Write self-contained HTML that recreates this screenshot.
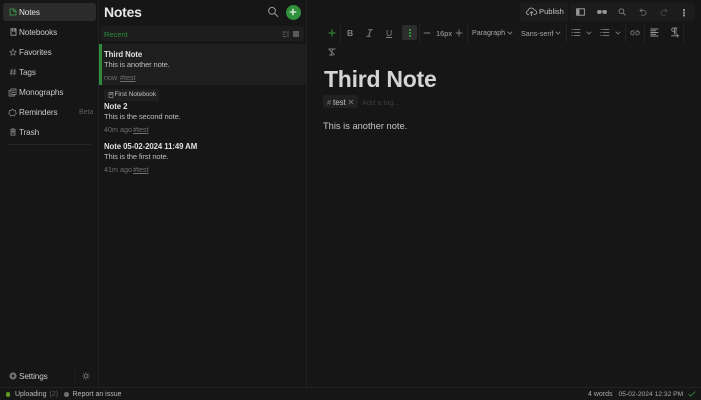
<!DOCTYPE html>
<html><head><meta charset="utf-8"><style>
*{margin:0;padding:0;box-sizing:border-box}
html,body{width:701px;height:400px;overflow:hidden;background:#161616}
#w{position:absolute;left:0;top:0;width:701px;height:400px;filter:blur(.3px);font-family:"Liberation Sans",sans-serif;color:#d8d8d8}
.t{position:absolute;white-space:nowrap;line-height:1}
.b{position:absolute}
svg{position:absolute;overflow:visible;fill:none;stroke-linecap:round;stroke-linejoin:round}
.nav{font-size:8.2px;color:#c8c8c8;left:19px;letter-spacing:-.12px}
.ti{font-size:7.8px;font-weight:bold;color:#e0e0e0;left:104px;letter-spacing:-.08px}
.bd{font-size:7.6px;color:#bcbcbc;left:104px;letter-spacing:-.15px}
.mt{font-size:7.2px;color:#6e6e6e}
.sep{position:absolute;width:1px;background:#232323;top:24px;height:18px}
.st{font-size:7px;color:#b8b8b8}
</style></head><body><div id="w">
<div class="b" style="left:98px;top:0;width:1px;height:388px;background:#222"></div>
<div class="b" style="left:306px;top:0;width:1px;height:388px;background:#222"></div>
<div class="b" style="left:0;top:387px;width:701px;height:1px;background:#222"></div>

<div class="b" style="left:3px;top:3px;width:93px;height:18px;background:#2b2b2b;border-radius:3px"></div>
<svg style="left:9px;top:8px" width="8" height="8" stroke="#3c8a44" stroke-width="1"><path d="M1 1H5L7 3V7H1Z"/><path d="M4.5 1V3.5H7"/></svg>
<div class="t nav" style="top:8.5px;color:#e4e4e4">Notes</div>
<svg style="left:9px;top:28px" width="8" height="8" stroke="#8e8e8e" stroke-width="1"><path d="M2 .8H7V7.2H2Z"/><path d="M3.5 .8V3H6V.8"/></svg>
<div class="t nav" style="top:28.5px">Notebooks</div>
<svg style="left:9px;top:48px" width="8" height="8" stroke="#7c7c7c" stroke-width=".8"><path d="M4 1L5 3.2L7.2 3.4L5.5 4.9L6 7.2L4 6L2 7.2L2.5 4.9L.8 3.4L3 3.2Z"/></svg>
<div class="t nav" style="top:48.5px">Favorites</div>
<svg style="left:9px;top:68px" width="8" height="8" stroke="#7c7c7c" stroke-width=".8"><path d="M3 1L2 7M6 1L5 7M1 3H7M1 5.2H7"/></svg>
<div class="t nav" style="top:68.5px">Tags</div>
<svg style="left:8px;top:88px" width="9" height="9" stroke="#7c7c7c" stroke-width=".9"><path d="M3 1H8V6.5H3Z"/><path d="M3 2.5H1V8H6.5V6.5"/><path d="M4.5 2.8H6.5M4.5 4.5H6.5"/></svg>
<div class="t nav" style="top:88.5px">Monographs</div>
<svg style="left:8px;top:108px" width="9" height="9" stroke="#7c7c7c" stroke-width=".8"><path d="M4.5 1L5.7 2.4H7.6V4.2L8.4 5.4L7 6.3L6.6 8L4.5 7.3L2.4 8L2 6.3L.6 5.4L1.4 4.2V2.4H3.3Z"/></svg>
<div class="t nav" style="top:108.5px">Reminders</div>
<div class="t" style="left:79px;top:109px;font-size:7px;color:#5c5c5c">Beta</div>
<svg style="left:9px;top:128px" width="8" height="8" stroke="#7c7c7c" stroke-width=".9"><path d="M2 2H6V7.2H2Z"/><path d="M1.3 1.8H6.7M3 .8H5M3 3.5H5M3 5H5"/></svg>
<div class="t nav" style="top:128.5px">Trash</div>
<div class="b" style="left:8px;top:144px;width:83px;height:1px;background:#262626"></div>

<svg style="left:9px;top:372px" width="8" height="8" stroke="none"><circle cx="4" cy="4" r="3.6" fill="#6e6e6e"/><circle cx="4" cy="4" r="1.2" fill="#161616"/></svg>
<div class="t nav" style="top:372.5px">Settings</div>
<div class="b" style="left:75px;top:368px;width:1px;height:16px;background:#1f1f1f"></div>
<svg style="left:82px;top:372px" width="8" height="8" stroke="#6e6e6e" stroke-width=".8"><circle cx="4" cy="4" r="1.6"/><path d="M4 .4V1.4M4 6.6V7.6M.4 4H1.4M6.6 4H7.6M1.5 1.5L2.2 2.2M5.8 5.8L6.5 6.5M1.5 6.5L2.2 5.8M5.8 2.2L6.5 1.5"/></svg>

<div class="t" style="left:104px;top:5px;font-size:14px;font-weight:bold;color:#e6e6e6;letter-spacing:-.25px">Notes</div>
<svg style="left:267px;top:6px" width="12" height="12" stroke="#9a9a9a" stroke-width="1"><circle cx="5" cy="4.8" r="3.4"/><path d="M7.6 7.4L10.8 10.6"/></svg>
<div class="b" style="left:285.5px;top:4.5px;width:15px;height:15px;border-radius:50%;background:#2f8f3a"></div>
<svg style="left:289px;top:8px" width="8" height="8" stroke="#e8f2e8" stroke-width="1.3"><path d="M4 1.2V6.8M1.2 4H6.8"/></svg>

<div class="b" style="left:101px;top:26px;width:203px;height:15px;background:#1d1d1d;border-radius:3px"></div>
<div class="t" style="left:104px;top:30.5px;font-size:7.5px;color:#2e8b3a">Recent</div>
<svg style="left:282px;top:30px" width="8" height="8" stroke="#5e5e5e" stroke-width=".9"><path d="M1 2H4M1 4.2H3M1 6.6H4M6 1.2V6.8"/></svg>
<div class="b" style="left:293px;top:31px;width:6px;height:6px;background:#5a5a5a"></div>

<div class="b" style="left:99px;top:44px;width:207px;height:41px;background:#1e1e1e"></div>
<div class="b" style="left:99px;top:44px;width:2.5px;height:41px;background:#2f8a3c"></div>
<div class="t ti" style="top:51px">Third Note</div>
<div class="t bd" style="top:61px">This is another note.</div>
<div class="t mt" style="left:104px;top:74px">now</div>
<div class="t mt" style="left:120px;top:74px;text-decoration:underline">#test</div>

<div class="b" style="left:104px;top:89px;width:55px;height:12px;background:#1f1f1f;border-radius:2px"></div>
<svg style="left:108px;top:92px" width="6" height="6" stroke="#8e8e8e" stroke-width=".7"><path d="M1 .5H5V5.5H1Z"/><path d="M2.2 .5V2.5H4V.5"/></svg>
<div class="t" style="left:114.5px;top:92px;font-size:6.4px;color:#c0c0c0">First Notebook</div>
<div class="t ti" style="top:103px">Note 2</div>
<div class="t bd" style="top:113px">This is the second note.</div>
<div class="t mt" style="left:104px;top:126px">40m ago</div>
<div class="t mt" style="left:133px;top:126px;text-decoration:underline">#test</div>

<div class="t ti" style="top:143px">Note 05-02-2024 11:49 AM</div>
<div class="t bd" style="top:153px">This is the first note.</div>
<div class="t mt" style="left:104px;top:166px">41m ago</div>
<div class="t mt" style="left:133px;top:166px;text-decoration:underline">#test</div>

<div class="b" style="left:520px;top:3px;width:48px;height:18px;background:#1c1c1c;border-radius:3px"></div>
<div class="b" style="left:570px;top:3px;width:125px;height:18px;background:#1c1c1c;border-radius:3px"></div>
<svg style="left:526px;top:7px" width="11" height="9" stroke="#a0a0a0" stroke-width=".9"><path d="M2.8 7.6H2.2A2 2 0 0 1 2 3.7A3.3 3.3 0 0 1 8.3 3.2A2.2 2.2 0 0 1 8.6 7.6H8"/><path d="M5.5 8.6V4.8M4 6.1L5.5 4.6L7 6.1"/></svg>
<div class="t" style="left:539px;top:8px;font-size:7.6px;color:#c4c4c4">Publish</div>
<svg style="left:576px;top:8px" width="9" height="8" stroke="#989898" stroke-width="1"><rect x=".6" y=".8" width="7.8" height="6.4"/><rect x="1" y="1.2" width="2.5" height="5.6" fill="#989898" stroke="none"/></svg>
<svg style="left:597px;top:9px" width="10" height="6" stroke="#989898" stroke-width=".7"><rect x=".5" y="1.5" width="3.6" height="3" rx="1" fill="#989898"/><rect x="5.9" y="1.5" width="3.6" height="3" rx="1" fill="#989898"/><path d="M4 2H6"/></svg>
<svg style="left:618px;top:8px" width="8" height="8" stroke="#808080" stroke-width=".9"><circle cx="3.4" cy="3.2" r="2.4"/><path d="M5.2 5L7.4 7.2"/></svg>
<svg style="left:639px;top:8px" width="8" height="8" stroke="#6c6c6c" stroke-width=".9"><path d="M2.8 1L1 2.6L2.8 4.2"/><path d="M1 2.6H4.8A2.3 2.3 0 0 1 4.8 7.2H2.6"/></svg>
<svg style="left:660px;top:8px" width="8" height="8" stroke="#464646" stroke-width=".9"><path d="M5.2 1L7 2.6L5.2 4.2"/><path d="M7 2.6H3.2A2.3 2.3 0 0 0 3.2 7.2H5.4"/></svg>
<div class="b" style="left:683px;top:9px;width:2px;height:2px;background:#909090;box-shadow:0 2.7px 0 #909090,0 5.4px 0 #909090"></div>

<svg style="left:328px;top:29px" width="8" height="8" stroke="#2e7d38" stroke-width="1.3"><path d="M4 1V7M1 4H7"/></svg>
<div class="sep" style="left:340px"></div>
<div class="t" style="left:347px;top:29px;font-size:8.6px;font-weight:bold;color:#808080">B</div>
<svg style="left:366px;top:29px" width="7" height="8" stroke="#808080" stroke-width="1"><path d="M2.6 .8H6.4M.8 7.2H4.4M4.6 .8L2.6 7.2"/></svg>
<div class="t" style="left:386px;top:28.5px;font-size:8.6px;color:#808080;text-decoration:underline">U</div>
<div class="b" style="left:402px;top:25px;width:15px;height:15px;background:#2d2d2d;border-radius:2px"></div>
<div class="b" style="left:409px;top:29px;width:1.5px;height:1.5px;background:#2f8f3a;box-shadow:0 3px 0 #2f8f3a,0 6px 0 #2f8f3a"></div>
<div class="sep" style="left:419px"></div>
<svg style="left:423px;top:29px" width="8" height="8" stroke="#7e7e7e" stroke-width=".9"><path d="M1 4H7"/></svg>
<div class="t" style="left:436px;top:29.5px;font-size:7.4px;color:#a8a8a8">16px</div>
<svg style="left:455px;top:29px" width="8" height="8" stroke="#7e7e7e" stroke-width=".9"><path d="M4 1V7M1 4H7"/></svg>
<div class="sep" style="left:467px"></div>
<div class="t" style="left:472px;top:30px;font-size:7.1px;color:#a8a8a8">Paragraph</div>
<svg style="left:507px;top:31px" width="6" height="5" stroke="#7e7e7e" stroke-width=".9"><path d="M1 1L3 3L5 1"/></svg>
<div class="t" style="left:521px;top:29.5px;font-size:7.2px;color:#a8a8a8">Sans-serif</div>
<svg style="left:555px;top:31px" width="6" height="5" stroke="#7e7e7e" stroke-width=".9"><path d="M1 1L3 3L5 1"/></svg>
<div class="sep" style="left:566px"></div>
<svg style="left:571px;top:28px" width="10" height="9" stroke="#727272" stroke-width=".9"><path d="M3 1.5H9M3 4.5H9M3 7.5H9M.8 1.5H1.3M.8 4.5H1.3M.8 7.5H1.3"/></svg>
<svg style="left:586px;top:31px" width="6" height="5" stroke="#727272" stroke-width=".9"><path d="M1 1L3 3L5 1"/></svg>
<svg style="left:600px;top:28px" width="10" height="9" stroke="#727272" stroke-width=".9"><path d="M3 1.5H9M3 4.5H9M3 7.5H9M.8 1.5H1.3M.8 4.5H1.3M.8 7.5H1.3"/></svg>
<svg style="left:615px;top:31px" width="6" height="5" stroke="#727272" stroke-width=".9"><path d="M1 1L3 3L5 1"/></svg>
<div class="sep" style="left:625px"></div>
<svg style="left:630px;top:30px" width="10" height="6" stroke="#7e7e7e" stroke-width=".9"><path d="M4 1H2.6A1.9 1.9 0 0 0 2.6 4.8H4M6 1H7.4A1.9 1.9 0 0 1 7.4 4.8H6M3.4 2.9H6.6"/></svg>
<div class="sep" style="left:644px"></div>
<svg style="left:650px;top:28px" width="9" height="9" stroke="#969696" stroke-width="1"><path d="M.8 1H8M.8 2.8H5.5M.8 4.5H8M.8 6.2H5.5M.8 8H8"/></svg>
<svg style="left:670px;top:27px" width="10" height="11" stroke="#868686" stroke-width="1"><path d="M7 1H3.4A1.7 1.7 0 0 0 3.4 4.4H4.5M4.5 1V7M6 1V7M1.5 8.8H8.5M7.2 7.6L8.5 8.8L7.2 10"/></svg>
<div class="sep" style="left:683px"></div>
<svg style="left:328px;top:48px" width="8" height="8" stroke="#7e7e7e" stroke-width=".9"><path d="M.8 1H7.2M4.5 1L3.2 7M1 1.4L6.5 6.8M1.4 7H5"/></svg>

<div class="t" style="left:324px;top:67.5px;font-size:23px;font-weight:bold;color:#d4d4d4;letter-spacing:-.25px">Third Note</div>

<div class="b" style="left:323px;top:95px;width:35px;height:13px;background:#202020;border-radius:2px"></div>
<div class="t" style="left:327px;top:99px;font-size:7.2px;color:#7c7c7c">#</div>
<div class="t" style="left:333px;top:98.5px;font-size:8px;color:#c0c0c0">test</div>
<svg style="left:348px;top:99px" width="6" height="6" stroke="#7e7e7e" stroke-width=".8"><path d="M1.2 1.2L4.8 4.8M4.8 1.2L1.2 4.8"/></svg>
<div class="t" style="left:362px;top:99px;font-size:7.4px;color:#3c3c3c">Add a tag...</div>

<div class="t" style="left:323px;top:122px;font-size:9.3px;color:#c4c4c4">This is another note.</div>

<div class="b" style="left:5.5px;top:392px;width:4.5px;height:4.5px;border-radius:50%;background:#5f9a1f"></div>
<div class="t st" style="left:15px;top:391px">Uploading</div>
<div class="t st" style="left:49.5px;top:391px;color:#5e5e5e">(2)</div>
<div class="b" style="left:64px;top:392px;width:4.5px;height:4.5px;border-radius:50%;background:#6e6e6e"></div>
<div class="t st" style="left:72.5px;top:391px">Report an issue</div>
<div class="t st" style="left:588px;top:391px;color:#a8a8a8">4 words</div>
<div class="t st" style="left:618.5px;top:392px;font-size:6.7px;color:#a8a8a8">05-02-2024 12:32 PM</div>
<svg style="left:688px;top:391px" width="8" height="6" stroke="#2e7d38" stroke-width="1"><path d="M.8 3.4L2.6 5L7 .8"/></svg>
</div></body></html>
